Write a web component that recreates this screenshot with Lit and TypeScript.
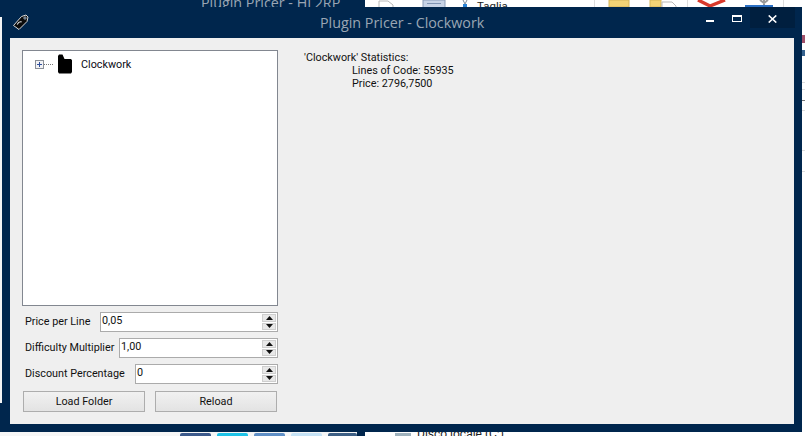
import { LitElement, html, css } from "lit";
import { customElement } from "lit/decorators.js";

@customElement("app-root")
export class AppRoot extends LitElement {
  static styles = css`
    :host { display: block; width: 805px; height: 436px; position: relative; overflow: hidden; background: #fff; font-family: Roboto, "Liberation Sans", Arial, sans-serif; font-size: 10.8px; color: #111; }
    .desk { position: absolute; inset: 0; overflow: hidden; }
    .desk > * { position: absolute; }
    .leftbg { left: 0; top: 0; width: 365px; height: 436px; background: #00264d; }
    .leftstrip { left: 0; top: 17px; width: 2px; height: 386px; background: #f4f4f4; }
    .band { left: 0; top: 432px; width: 357px; height: 4px; background: #f6f6f6; }
    .bgtitle { left: 201px; top: -7px; font: 14.3px "Open Sans", sans-serif; color: #9aa6b4; white-space: nowrap; }
    .tool { top: 0; height: 7px; }
    .t1 { left: 378px; } .t2 { left: 422px; } .t3 { left: 460px; } .t4 { left: 608px; } .t5 { left: 649px; } .t6 { left: 696px; } .t7 { left: 745px; }
    .taglia { left: 477px; top: -1px; font-size: 11.5px; color: #222; }
    .sep { top: 0; width: 1px; height: 7px; background: #ddd; }
    .s1 { left: 594px; } .s2 { left: 687px; } .s3 { left: 783px; }
    .tile { top: 433px; height: 3px; border-radius: 2px 2px 0 0; }
    .tile1 { left: 180px; width: 31px; background: #3c5a8c; }
    .tile2 { left: 217px; width: 31px; background: #1ec3e8; }
    .tile3 { left: 254px; width: 31px; background: #5f8fc6; }
    .tile4 { left: 291px; width: 31px; background: #c5e2f5; }
    .tile5 { left: 328px; width: 29px; background: #3d5f85; }
    .disk { left: 417px; top: 427px; font-size: 12px; color: #222; white-space: nowrap; }
    .diskicon { left: 395px; top: 433px; width: 16px; height: 3px; background: #9fb2bd; }
    .edge { left: 802px; width: 3px; }
    .e1 { top: 35px; height: 8px; background: #a0506a; }
    .e2 { top: 50px; height: 6px; background: #36638f; }
    .e3 { top: 82px; height: 1px; background: #ddd; }
    .e4 { top: 89px; height: 1px; background: #ddd; }
    .e5 { top: 100px; height: 1px; background: #777; }
    .e6 { top: 110px; height: 1px; background: #ddd; }
    .e7 { top: 150px; height: 1px; background: #ddd; }
    .e8 { top: 171px; height: 1px; background: #ddd; }

    .window { position: absolute; left: 2px; top: 7px; width: 800px; height: 425px; box-sizing: border-box; background: #00264d; padding: 0 8px 8px 8px; display: flex; flex-direction: column; }
    .titlebar { height: 31px; flex: none; display: flex; align-items: flex-start; }
    .ticon { margin: 6px 0 0 2px; flex: none; }
    .title { flex: 1; margin-left: 290px; font: 14.3px/31px "Open Sans", sans-serif; color: #9aa6b4; white-space: nowrap; }
    .ctrl { height: 21px; flex: none; display: flex; justify-content: center; align-items: flex-start; }
    .ctrl svg { display: block; }
    .min { width: 28px; } .min svg { margin-top: 13px; }
    .max { width: 26px; } .max svg { margin-top: 8px; }
    .close { width: 45px; margin-right: -1px; background: #001f3f; } .close svg { margin-top: 8px; }

    .client { flex: 1; background: #efefef; display: flex; padding: 12px 0 0 12px; box-sizing: border-box; min-height: 0; }
    .side { width: 256px; flex: none; display: flex; flex-direction: column; }
    .tree { height: 256px; flex: none; box-sizing: border-box; border: 1px solid #828790; background: #fff; padding: 5px 0 0 12px; }
    .tree-row { display: flex; align-items: center; height: 16px; }
    .expander { width: 7px; height: 7px; border: 1px solid #8a8f98; background: #f2f2f4; display: block; }
    .expander svg { display: block; }
    .dots { width: 9px; border-top: 1px dotted #777; }
    .folder { margin-left: 4px; display: block; flex: none; }
    .tree-label { margin-left: 8px; color: #0a0a14; }

    .row { display: flex; align-items: center; height: 20px; margin-top: 6px; }
    .row label { padding-left: 3px; padding-bottom: 1px; white-space: nowrap; }
    .num { margin-left: auto; height: 20px; box-sizing: border-box; border: 1px solid #ababab; background: #fff; display: flex; padding-right: 1px; }
    .w1 { width: 178px; } .w2 { width: 159px; } .w3 { width: 143px; }
    .num span { padding-left: 1px; line-height: 16px; flex: 1; }
    .spin { width: 14px; flex: none; display: flex; flex-direction: column; gap: 1px; background: #fff; padding: 1px 0; }
    .spin i { flex: 1; display: flex; align-items: center; justify-content: center; background: #e8e8e8; border: 1px solid #cfcfcf; box-sizing: border-box; }
    .spin svg { display: block; }

    .btns { display: flex; gap: 10px; margin-top: 7px; width: 254px; margin-left: 1px; }
    .btn { width: 122px; height: 21px; box-sizing: border-box; border: 1px solid #adadad; background: linear-gradient(#f1f1f1, #e3e3e3); display: flex; align-items: center; justify-content: center; color: #111; }

    .stats { margin-left: 26px; padding-top: 1px; line-height: 13px; color: #111; white-space: pre; }
    .sub { padding-left: 48px; }
  `;

  private spinner() {
    return html`<div class="spin">
      <i><svg width="7" height="4" viewBox="0 0 7 4"><path d="M3.5 0 7 4H0z" fill="#111"/></svg></i>
      <i><svg width="7" height="4" viewBox="0 0 7 4"><path d="M0 0h7L3.5 4z" fill="#111"/></svg></i>
    </div>`;
  }

  render() {
    return html`
      <div class="desk">
        <div class="leftbg"></div>
        <div class="leftstrip"></div>
        <div class="band"></div>
        <div class="bgtitle">Plugin Pricer - HL2RP</div>
        <svg class="tool t1" width="30" height="7" viewBox="0 0 30 7"><path d="M1 7V1h9l5 4v2" fill="#fff" stroke="#b9b9b9"/></svg>
        <svg class="tool t2" width="26" height="7" viewBox="0 0 26 7"><rect x="1" y="0" width="22" height="8" fill="#c7d3e6" stroke="#8a9cb8"/><rect x="5" y="3" width="14" height="1" fill="#7f93b2"/></svg>
        <svg class="tool t3" width="10" height="7" viewBox="0 0 10 7"><path d="M3 0l2 4 2-4" stroke="#7d8b99" fill="none"/><rect x="3" y="4" width="4" height="3" fill="#2a83d6"/></svg>
        <div class="taglia">Taglia</div>
        <div class="sep s1"></div>
        <svg class="tool t4" width="22" height="7" viewBox="0 0 22 7"><path d="M1 0h20v7H1z" fill="#f3d376" stroke="#d6b55a"/></svg>
        <svg class="tool t5" width="30" height="7" viewBox="0 0 30 7"><path d="M1 0h11v7H1z" fill="#f3d376" stroke="#d6b55a"/><path d="M13 7V2h10l4 4v1" fill="#fff" stroke="#b9b9b9"/></svg>
        <div class="sep s2"></div>
        <svg class="tool t6" width="32" height="7" viewBox="0 0 32 7"><path d="M2 0l12 6 15-6" stroke="#d8392b" stroke-width="3.4" fill="none"/></svg>
        <svg class="tool t7" width="28" height="7" viewBox="0 0 28 7"><rect x="0" y="5" width="28" height="2" fill="#2a6fc4"/><path d="M19 0v5M15 0l4 3 4-3" stroke="#9a9a9a" stroke-width="2" fill="none"/></svg>
        <div class="sep s3"></div>
        <div class="edge e1"></div><div class="edge e2"></div><div class="edge e3"></div><div class="edge e4"></div>
        <div class="edge e5"></div><div class="edge e6"></div><div class="edge e7"></div><div class="edge e8"></div>
        <div class="tile tile1"></div><div class="tile tile2"></div><div class="tile tile3"></div><div class="tile tile4"></div><div class="tile tile5"></div>
        <div class="diskicon"></div>
        <div class="disk">Disco locale (C:)</div>
      </div>

      <div class="window">
        <div class="titlebar">
          <svg class="ticon" width="18" height="18" viewBox="0 0 18 18">
            <path d="M1.5 12.5 9.5 3.5l4.5-1.5 2 2-1 4.5-8 8z" fill="#0b0b0b" stroke="#d8d8d8" stroke-width="1" stroke-linejoin="round"/>
            <circle cx="13" cy="5" r="1.2" fill="#00264d" stroke="#d8d8d8" stroke-width=".7"/>
            <path d="M5.2 11.5c1-2 2.8-3 4.4-2.6" stroke="#e8e8e8" stroke-width="1.1" fill="none"/>
          </svg>
          <div class="title">Plugin Pricer - Clockwork</div>
          <div class="ctrl min"><svg width="8" height="2" viewBox="0 0 8 2"><rect width="8" height="2" fill="#fff"/></svg></div>
          <div class="ctrl max"><svg width="10" height="7" viewBox="0 0 10 7"><rect x=".5" y=".5" width="9" height="6" fill="none" stroke="#fff"/><rect width="10" height="2" fill="#fff"/></svg></div>
          <div class="ctrl close"><svg width="9" height="8" viewBox="0 0 9 8"><path d="M.7.4l7.6 7.2M8.3.4.7 7.6" stroke="#fff" stroke-width="1.5"/></svg></div>
        </div>
        <div class="client">
          <div class="side">
            <div class="tree">
              <div class="tree-row">
                <span class="expander"><svg width="7" height="7" viewBox="0 0 7 7"><path d="M1 3.5h5M3.5 1v5" stroke="#2f4f9c"/></svg></span>
                <span class="dots"></span>
                <svg class="folder" width="16" height="20" viewBox="0 0 16 20"><path d="M1 2 2 .5h3.5l2 4.5H14l1 1.2V18l-1 1.5H2L1 18z" fill="#000"/></svg>
                <span class="tree-label">Clockwork</span>
              </div>
            </div>
            <div class="row"><label>Price per Line</label><div class="num w1"><span>0,05</span>${this.spinner()}</div></div>
            <div class="row"><label>Difficulty Multiplier</label><div class="num w2"><span>1,00</span>${this.spinner()}</div></div>
            <div class="row"><label>Discount Percentage</label><div class="num w3"><span>0</span>${this.spinner()}</div></div>
            <div class="btns"><div class="btn">Load Folder</div><div class="btn">Reload</div></div>
          </div>
          <div class="stats"><div>'Clockwork' Statistics:</div><div class="sub">Lines of Code: 55935</div><div class="sub">Price: 2796,7500</div></div>
        </div>
      </div>
    `;
  }
}
